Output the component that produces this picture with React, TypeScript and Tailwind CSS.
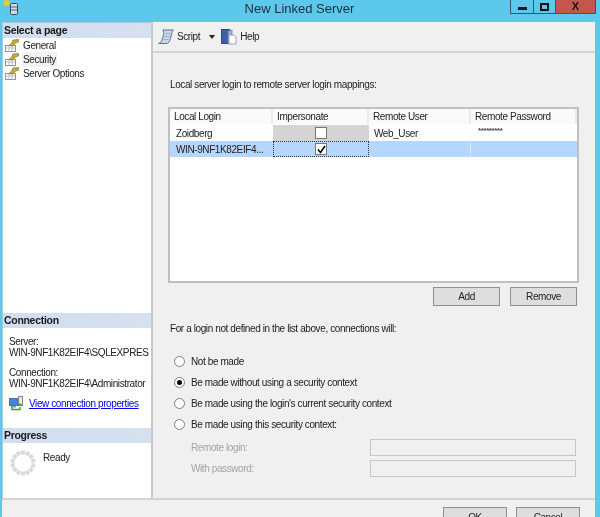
const font = "font-['Liberation_Sans',Arial,sans-serif]";

const PageIcon = () => (
  <svg width="14" height="13" viewBox="0 0 14 13" className="shrink-0">
    <rect x="0.5" y="6.5" width="10" height="6" fill="#fff" stroke="#8a97a5" />
    <path d="M1 9h9M4 7v5M7 7v5" stroke="#a9b4c0" strokeWidth="0.8" />
    <path d="M4 6.500l3-3 1-2.500 5.500-.5v2.500l-3 1-2.500 3z" fill="#d2a92f" stroke="#6d6a2e" strokeWidth="0.6" />
  </svg>
);

const ScriptIcon = () => (
  <svg width="16" height="16" viewBox="0 0 16 16" className="shrink-0">
    <path d="M5 1h10.500c-1.500 1-2 2-1.500 3.500l-2 6c-.5 2-1 3-2.500 4H.5c1.500-.5 3-1.500 3.500-3.500l1.500-5C6 4 5.500 2.500 5 1z" fill="#ccd6e6" stroke="#5c7295" />
    <path d="M7.500 4.500h5M6.500 7.500h5M5.500 10.500h5" stroke="#8ea1bd" strokeWidth="0.8" />
  </svg>
);

const HelpIcon = () => (
  <svg width="16" height="17" viewBox="0 0 16 17" className="shrink-0">
    <rect x="0.500" y="1.500" width="8" height="14" fill="#3f5fa8" stroke="#2d4a8c" />
    <path d="M7 3l4-1v13l-4 1z" fill="#9db2d8" stroke="#5a74a8" strokeWidth="0.7" />
    <path d="M8 7h5l2 2v7H8z" fill="#fff" stroke="#8090a8" strokeWidth="0.8" />
  </svg>
);

const LinkIcon = () => (
  <svg width="15" height="15" viewBox="0 0 15 15" className="shrink-0">
    <rect x="0.500" y="2.500" width="8" height="7" fill="#3f86e0" stroke="#5a6f95" />
    <rect x="2" y="10" width="5" height="1.500" fill="#8a97a5" />
    <rect x="9.500" y="0.500" width="4" height="9" fill="#e4e8ee" stroke="#7d8896" />
    <path d="M3 11v2.500h8V11M9 10l2-2 2 2" fill="none" stroke="#3f9b3c" strokeWidth="1.400" />
  </svg>
);

const Spinner = () => {
  const blocks = Array.from({ length: 14 }, (_, i) => (i * 360) / 14);
  return (
    <svg width="26" height="26" viewBox="0 0 26 26" className="shrink-0">
      {blocks.map((a) => (
        <rect key={a} x="11" y="0.500" width="4" height="4" fill="#dadada" transform={`rotate(${a} 13 13)`} />
      ))}
    </svg>
  );
};

const TitleIcon = () => (
  <svg width="16" height="16" viewBox="0 0 16 16">
    <circle cx="3.500" cy="3" r="3" fill="#f5c52e" />
    <rect x="7.500" y="3.500" width="7" height="11" rx="1" fill="#d5dbe3" stroke="#34495e" />
    <path d="M8 7h6M8 10h6" stroke="#34495e" strokeWidth="0.8" />
  </svg>
);

const SectionHeader = ({ children }: { children: string }) => (
  <div className="h-[15px] pl-[1px] bg-gradient-to-r from-[#d0deee] to-[#d5e1ef] text-[10.5px] tracking-[-0.3px] leading-[15px] font-bold text-[#1a1a1a]">
    {children}
  </div>
);

const Radio = ({ label, checked }: { label: string; checked?: boolean }) => (
  <div className="flex items-center h-[21px] pl-[21px] gap-[6px]">
    <span className="flex items-center justify-center w-[11px] h-[11px] rounded-full border border-[#808080] bg-white">
      {checked && <span className="w-[5px] h-[5px] rounded-full bg-black" />}
    </span>
    <span>{label}</span>
  </div>
);

const Checkbox = ({ checked }: { checked?: boolean }) => (
  <span className="flex items-center justify-center w-[12px] h-[12px] border border-[#777] bg-white">
    {checked && (
      <svg width="9" height="9" viewBox="0 0 9 9">
        <path d="M1 4.500l2.500 3L8 1" fill="none" stroke="#000" strokeWidth="1.600" />
      </svg>
    )}
  </span>
);

const Button = ({ label, className }: { label: string; className: string }) => (
  <div className={`flex items-center justify-center border border-[#8f8f8f] bg-[#dedede] ${className}`}>{label}</div>
);

const columns = [
  { label: "Local Login", width: "w-[103px]" },
  { label: "Impersonate", width: "w-[96px]" },
  { label: "Remote User", width: "w-[102px]" },
  { label: "Remote Password", width: "flex-1" },
];

export default function App() {
  return (
    <div className={`${font} w-[600px] h-[517px] overflow-hidden flex flex-col bg-[#5cc9ec] text-[10px] tracking-[-0.4px] text-[#222] blur-[0.35px]`}>
      {/* title bar */}
      <div className="relative h-[22px] shrink-0 flex items-center justify-center text-[13px] tracking-normal text-[#1c2d38]">
        <div className="absolute left-[3px] top-0">
          <TitleIcon />
        </div>
        <span className="ml-[-1px] mt-[-5px]">New Linked Server</span>
        <div className="absolute right-[4px] top-0 flex h-[14px] border border-t-0 border-[#2f5a6e]">
          <div className="w-[23px] flex items-center justify-center border-r border-[#2f5a6e]">
            <span className="w-[9px] h-[3px] mt-[3px] bg-[#111]" />
          </div>
          <div className="w-[22px] flex items-center justify-center border-r border-[#2f5a6e]">
            <span className="w-[9px] h-[8px] border-2 border-[#111]" />
          </div>
          <div className="w-[39px] flex items-center justify-center bg-[#c4574c] text-[11px] font-bold text-[#111]">X</div>
        </div>
      </div>

      <div className="ml-[2px] mr-[5px] flex-1 flex flex-col bg-[#f0f0f0]">
        <div className="flex h-[476px]">
          {/* left pane */}
          <div className="w-[149px] flex flex-col bg-white border-l border-t border-[#a9c9d6]">
            <SectionHeader>Select a page</SectionHeader>
            <div className="pl-[2px]">
              {["General", "Security", "Server Options"].map((p) => (
                <div key={p} className="flex items-center h-[14px] gap-[3px]">
                  <PageIcon />
                  <span className={p === "Security" ? "bg-[#f2f2f2] px-[1px]" : "px-[1px]"}>{p}</span>
                </div>
              ))}
            </div>
            <div className="flex-1" />
            <SectionHeader>Connection</SectionHeader>
            <div className="h-[100px] pl-[6px] pt-[8px] leading-[11px] whitespace-nowrap overflow-hidden">
              <div>Server:</div>
              <div>WIN-9NF1K82EIF4\SQLEXPRES</div>
              <div className="mt-[9px]">Connection:</div>
              <div>WIN-9NF1K82EIF4\Administrator</div>
              <div className="flex items-center gap-[5px] mt-[7px]">
                <LinkIcon />
                <span className="text-[#0000ee] underline">View connection properties</span>
              </div>
            </div>
            <SectionHeader>Progress</SectionHeader>
            <div className="flex pl-[7px] pt-[7px] gap-[7px] h-[55px]">
              <Spinner />
              <span>Ready</span>
            </div>
          </div>

          <div className="w-[2px] bg-[#c8c8c8]" />

          {/* right pane */}
          <div className="flex-1 flex flex-col">
            <div className="h-[31px] shrink-0 flex items-center pl-[5px] border-b-2 border-[#d4d4d4]">
              <ScriptIcon />
              <span className="ml-[3px]">Script</span>
              <span className="ml-[9px] w-0 h-0 border-x-[3px] border-x-transparent border-t-[4px] border-t-[#222]" />
              <span className="ml-[6px]"><HelpIcon /></span>
              <span className="ml-[3px]">Help</span>
            </div>
            <div className="pl-[17px] pt-[26px] h-[54px] leading-[12px]">Local server login to remote server login mappings:</div>
            <div className="w-[411px] h-[176px] ml-[15px] border-2 border-[#c0c0c0] bg-white flex flex-col">
              <div className="flex h-[15px] shrink-0">
                {columns.map((c) => (
                  <div key={c.label} className={`${c.width} pl-[4px] leading-[15px] border-r-2 border-[#ececec] bg-[#fafafa]`}>
                    {c.label}
                  </div>
                ))}
              </div>
              <div className="flex h-[16px] mt-[1px] items-center">
                <div className="w-[103px] pl-[6px]">Zoidberg</div>
                <div className="w-[96px] h-full flex items-center justify-center bg-[#d4d4d4]">
                  <Checkbox />
                </div>
                <div className="w-[102px] pl-[5px]">Web_User</div>
                <div className="flex-1 pl-[7px] pb-[4px] font-bold leading-[10px] text-[8px] tracking-[-0.4px] text-[#444]">*********</div>
              </div>
              <div className="flex h-[16px] items-center bg-[#b5d7fd]">
                <div className="w-[103px] pl-[6px]">WIN-9NF1K82EIF4...</div>
                <div className="w-[96px] h-full flex items-center justify-center border border-dotted border-[#333]">
                  <Checkbox checked />
                </div>
                <div className="w-[102px] h-full border-r border-[#d8e8fb]" />
              </div>
            </div>
            <div className="flex justify-end gap-[10px] pr-[18px] mt-[4px]">
              <Button label="Add" className="w-[67px] h-[19px]" />
              <Button label="Remove" className="w-[67px] h-[19px]" />
            </div>
            <div className="pl-[17px] mt-[17px] leading-[12px]">For a login not defined in the list above, connections will:</div>
            <div className="mt-[16px]">
              <Radio label="Not be made" />
              <Radio label="Be made without using a security context" checked />
              <Radio label="Be made using the login's current security context" />
              <Radio label="Be made using this security context:" />
            </div>
            <div className="mt-[4px] flex flex-col gap-[4px] text-[#a3a3a3]">
              {["Remote login:", "With password:"].map((l) => (
                <div key={l} className="flex items-center h-[17px] pl-[38px]">
                  <span className="w-[179px]">{l}</span>
                  <div className="w-[206px] h-full border border-[#c6c6c6] bg-[#f0f0f0]" />
                </div>
              ))}
            </div>
          </div>
        </div>

        {/* footer */}
        <div className="flex-1 flex justify-end items-start gap-[9px] pt-[7px] pr-[15px] border-t-2 border-[#d4d4d4]">
          <Button label="OK" className="w-[64px] h-[20px] border-[#5a9bd5]" />
          <Button label="Cancel" className="w-[64px] h-[20px]" />
        </div>
      </div>
    </div>
  );
}
